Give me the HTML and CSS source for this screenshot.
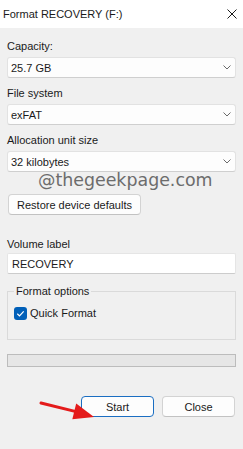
FILE: index.html
```html
<!DOCTYPE html>
<html>
<head>
<meta charset="utf-8">
<link rel="stylesheet" href="styles.css">
</head>
<body>
<div class="window">
  <div class="titlebar">
    <span class="title">Format RECOVERY (F:)</span>
    <svg class="close-x" width="10" height="10" viewBox="0 0 10 10"><path d="M0.5 0.5 L9.5 9.5 M9.5 0.5 L0.5 9.5" stroke="#1a1a1a" stroke-width="1" fill="none"/></svg>
  </div>
  <div class="content">
    <div class="label first">Capacity:</div>
    <div class="select"><span>25.7 GB</span><svg width="8" height="5" viewBox="0 0 8 5"><path d="M0.5 0.5 L4 4 L7.5 0.5" stroke="#6a6a6a" stroke-width="1" fill="none"/></svg></div>
    <div class="label">File system</div>
    <div class="select"><span>exFAT</span><svg width="8" height="5" viewBox="0 0 8 5"><path d="M0.5 0.5 L4 4 L7.5 0.5" stroke="#6a6a6a" stroke-width="1" fill="none"/></svg></div>
    <div class="label">Allocation unit size</div>
    <div class="select"><span>32 kilobytes</span><svg width="8" height="5" viewBox="0 0 8 5"><path d="M0.5 0.5 L4 4 L7.5 0.5" stroke="#6a6a6a" stroke-width="1" fill="none"/></svg></div>
    <div class="restore-row"><button class="btn restore">Restore device defaults</button></div>
    <div class="label vol">Volume label</div>
    <div class="textbox">RECOVERY</div>
    <fieldset class="group">
      <legend>Format options</legend>
      <div class="check-row">
        <span class="checkbox"><svg width="13" height="13" viewBox="0 0 13 13"><path d="M3.3 6.8 L5.5 8.9 L9.7 4.4" stroke="#ffffff" stroke-width="1.2" fill="none"/></svg></span>
        <span>Quick Format</span>
      </div>
    </fieldset>
    <div class="progress"></div>
    <div class="actions">
      <button class="btn primary">Start</button>
      <button class="btn">Close</button>
    </div>
  </div>
  <div class="watermark">@thegeekpage.com</div>
  <svg class="arrow" width="100" height="32" viewBox="0 0 100 32">
    <line x1="41" y1="8" x2="76" y2="16.6" stroke="#e41b1b" stroke-width="3" stroke-linecap="round"/>
    <polygon points="94,22 72.3,24.2 76.2,8.6" fill="#e41b1b"/>
  </svg>
</div>
</body>
</html>
```

FILE: styles.css
```css
html, body {
  margin: 0;
  padding: 0;
  background: #f0f0f0;
}
.window {
  position: relative;
  width: 243px;
  height: 449px;
  background: #f0f0f0;
  font-family: "Liberation Sans", Arial, sans-serif;
  font-size: 11px;
  line-height: 16px;
  color: #1a1a1a;
  overflow: hidden;
}
.titlebar {
  height: 28px;
  background: #ffffff;
  display: flex;
  align-items: center;
  justify-content: space-between;
  padding: 0 6px 0 3px;
}
.title {
  font-size: 11px;
  color: #1a1a1a;
}
.close-x {
  display: block;
  margin-top: -1px;
}
.content {
  padding: 0 7px;
}
.label {
  margin-top: 7px;
  height: 16px;
}
.label.first {
  margin-top: 10px;
}
.select {
  margin-top: 3px;
  height: 21px;
  box-sizing: border-box;
  background: #fdfdfd;
  border: 1px solid #e2e2e2;
  border-bottom-color: #cfcfcf;
  border-radius: 3px;
  display: flex;
  align-items: center;
  justify-content: space-between;
  padding: 0 4px 0 3px;
}
.select svg {
  display: block;
}
.restore-row {
  margin-top: 22px;
  padding-left: 1px;
}
.btn {
  font-family: "Liberation Sans", Arial, sans-serif;
  font-size: 11px;
  line-height: 16px;
  color: #1a1a1a;
  height: 21px;
  box-sizing: border-box;
  background: #fdfdfd;
  border: 1px solid #d3d3d3;
  border-bottom-color: #c2c2c2;
  border-radius: 4px;
  padding: 0 8px;
  margin: 0;
  display: block;
}
.restore {
  width: 133px;
}
.label.vol {
  margin-top: 21px;
}
.textbox {
  margin-top: 1px;
  height: 21px;
  box-sizing: border-box;
  background: #ffffff;
  border: 1px solid #e5e5e5;
  border-bottom-color: #cccccc;
  border-radius: 2px;
  padding: 0 4px;
  display: flex;
  align-items: center;
}
.group {
  margin: 9px 0 0 0;
  padding: 0 6px 0 6px;
  border: 1px solid #dadada;
  height: 57px;
  box-sizing: border-box;
  min-width: 0;
}
.group legend {
  padding: 0 2px;
  margin: 0;
  line-height: 16px;
}
.check-row {
  margin-top: 6px;
  display: flex;
  align-items: center;
  gap: 3px;
}
.checkbox {
  width: 13px;
  height: 13px;
  border-radius: 3px;
  background: #005fb8;
  display: block;
}
.checkbox svg {
  display: block;
}
.progress {
  margin-top: 14px;
  height: 13px;
  box-sizing: border-box;
  border: 1px solid #bcbcbc;
  background: #e6e6e6;
}
.actions {
  margin-top: 29px;
  display: flex;
  justify-content: flex-end;
  gap: 8px;
  padding-right: 1px;
}
.actions .btn {
  width: 73px;
  padding: 0;
  text-align: center;
}
.btn.primary {
  border: 1px solid #1b6ec2;
}
.watermark {
  position: absolute;
  left: 38px;
  top: 170px;
  font-family: "DejaVu Sans", sans-serif;
  font-size: 17.4px;
  line-height: 20px;
  color: #6c6c6c;
  white-space: nowrap;
}
.arrow {
  position: absolute;
  left: 0;
  top: 395px;
}
```
